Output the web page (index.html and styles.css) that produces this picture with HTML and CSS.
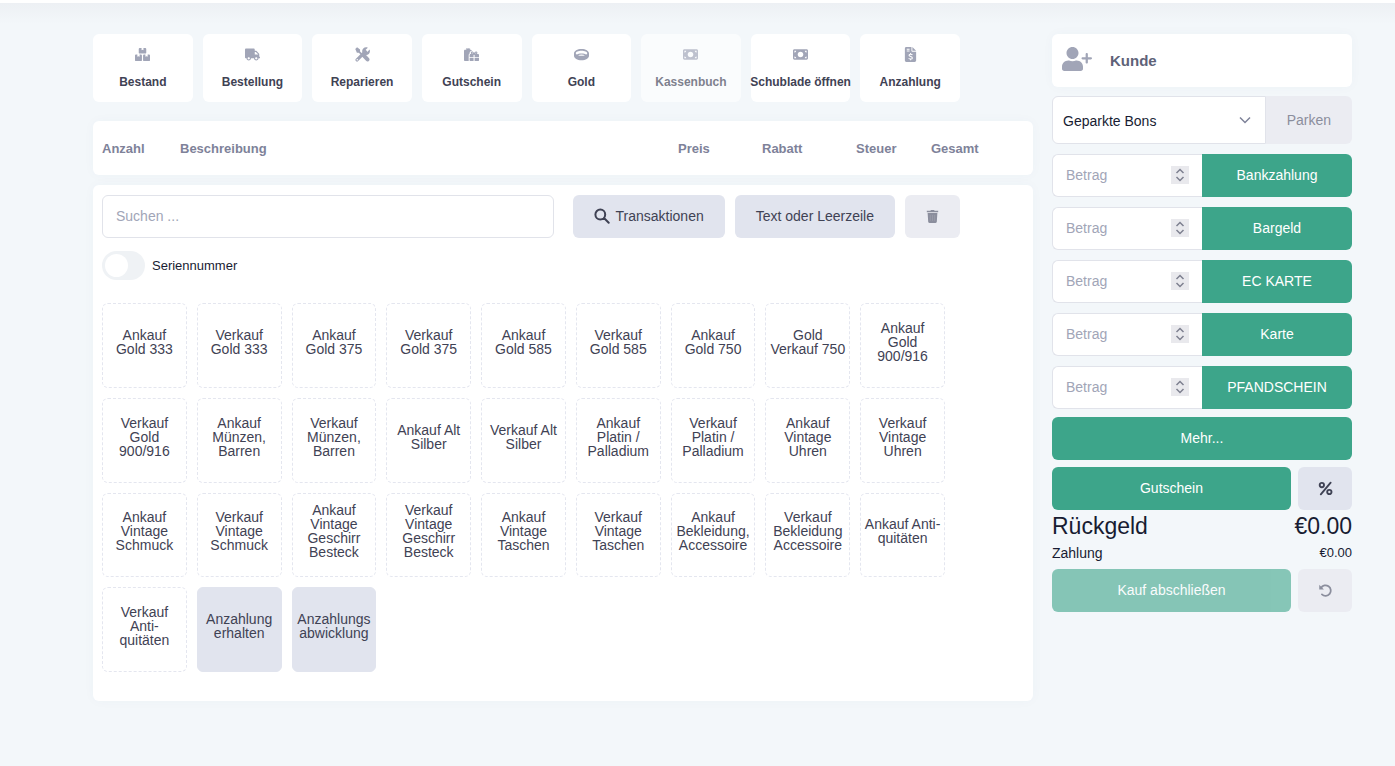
FILE: index.html
```html
<!DOCTYPE html>
<html lang="de">
<head>
<meta charset="utf-8">
<meta name="viewport" content="width=device-width, initial-scale=1">
<title>Kasse</title>
<link rel="stylesheet" href="styles.css">
</head>
<body>
<div class="page">
  <main class="main">
    <nav class="shortcuts">
      <button class="shortcut" type="button">
        <svg class="icon" viewBox="0 0 16 16"><path d="M5 1h2v2.500l1-.6 1 .6V1h2c.6 0 1 .4 1 1v4c0 .6-.4 1-1 1H5c-.6 0-1-.4-1-1V2c0-.6.400-1 1-1zM1 8h1.500v2.500l1.200-.6 1.200.6V8h1.500c.6 0 1 .4 1 1v5c0 .6-.4 1-1 1H1c-.6 0-1-.4-1-1V9c0-.6.400-1 1-1zM9.600 8h1.500v2.500l1.200-.6 1.200.6V8H15c.6 0 1 .4 1 1v5c0 .6-.4 1-1 1H9.600c-.6 0-1-.4-1-1V9c0-.6.400-1 1-1z"/></svg>
        <span>Bestand</span>
      </button>
      <button class="shortcut" type="button">
        <svg class="icon" viewBox="0 -64 640 640"><path d="M624 352h-16V243.900c0-12.700-5.100-24.900-14.100-33.900L494 110.100c-9-9-21.200-14.100-33.900-14.100H416V48c0-26.500-21.500-48-48-48H48C21.500 0 0 21.500 0 48v320c0 26.500 21.500 48 48 48h16c0 53 43 96 96 96s96-43 96-96h128c0 53 43 96 96 96s96-43 96-96h48c8.800 0 16-7.200 16-16v-32c0-8.800-7.200-16-16-16zM160 464c-26.500 0-48-21.500-48-48s21.500-48 48-48 48 21.500 48 48-21.500 48-48 48zm320 0c-26.500 0-48-21.500-48-48s21.500-48 48-48 48 21.500 48 48-21.500 48-48 48zm80-208H416V144h44.100l99.900 99.900V256z"/></svg>
        <span>Bestellung</span>
      </button>
      <button class="shortcut" type="button">
        <svg class="icon" viewBox="0 0 16 16"><path d="M.3 2.200 2.200.3l3.200 2.300v2.100l2.800 2.800-1.400 1.400L4 6.100H2z"/><path d="M9.500 9.300 13.300 13.300" fill="none" stroke="currentColor" stroke-width="4.200" stroke-linecap="round"/><path d="M2.200 13.800 11 5" fill="none" stroke="currentColor" stroke-width="3.400" stroke-linecap="round"/><path d="M13.700.7 11.400 3l.3 1.700 1.600.3 2.300-2.300c.7 1.800.3 3.500-.9 4.700-1.200 1.200-3 1.400-4.400.8L7.800 5.500c-.4-1.400-.1-2.900 1-4C10.100.2 12 0 13.700.7z"/><circle cx="2.400" cy="13.600" r=".8" fill="#fff"/></svg>
        <span>Reparieren</span>
      </button>
      <button class="shortcut" type="button">
        <svg class="icon" viewBox="0 0 16 16"><path d="M1.200 3h1.500L2 1.800l1-.5.6.9.3-1.200h.9l.3 1.200.8-.8.9.6L6 3h1.200c.6 0 1 .4 1 1v.3C6.500 4.200 5.800 5.700 6.100 7c-.7.300-1.100.8-1.100 1.600V15H1.200C.5 15 0 14.500 0 13.800V4.200C0 3.500.5 3 1.200 3z"/><path d="M6 10.800V8.600C6 8 6.400 7.500 7 7.500h3.200V10.800zM11.300 10.800V7.500H15c.6 0 1 .5 1 1.100v2.200zM6 11.800h4.200V15H7c-.6 0-1-.4-1-1zM11.300 11.800H16V14c0 .6-.4 1-1 1h-3.700z"/><path d="M10.700 7.800C8.600 7.700 7.500 7 7.900 5.800c.5-1.200 2.200-.3 2.800 2zm0 0c2.100-.1 3.400-.8 3-2-.5-1.200-2.400-.3-3 2z" fill="none" stroke="currentColor" stroke-width="1.200"/></svg>
        <span>Gutschein</span>
      </button>
      <button class="shortcut" type="button">
        <svg class="icon" viewBox="0 0 16 16"><path fill-rule="evenodd" d="M8 2c4.500 0 8 1.900 8 4.800v2.600c0 2.900-3.500 4.800-8 4.800s-8-1.900-8-4.800V6.800C0 3.900 3.500 2 8 2zm0 1.900c-3.400 0-6.100 1.200-6.100 2.700 0 .6.300 1.100 1 1.500C4 7.300 5.800 6.800 8 6.800s4 .5 5.100 1.300c.7-.4 1-.9 1-1.500 0-1.500-2.700-2.700-6.100-2.700zm0 4.200c-1.400 0-2.700.2-3.700.7 1 .4 2.300.6 3.700.6s2.700-.2 3.700-.6c-1-.5-2.300-.7-3.700-.7z"/></svg>
        <span>Gold</span>
      </button>
      <button class="shortcut" type="button" disabled>
        <svg class="icon" viewBox="0 0 16 16"><path fill-rule="evenodd" d="M1.500 2.500h13c.8 0 1.500.7 1.500 1.500v8c0 .8-.7 1.500-1.500 1.500h-13C.7 13.500 0 12.800 0 12V4c0-.8.7-1.500 1.500-1.500zM8 5C6.300 5 5 6.300 5 8s1.300 3 3 3 3-1.300 3-3-1.300-3-3-3zM1.500 4v1.900c1 0 1.900-.9 1.900-1.900zm11.100 0c0 1 .9 1.900 1.900 1.900V4zM1.500 10.100V12h1.900c0-1-.9-1.900-1.900-1.900zm13 0c-1 0-1.900.9-1.900 1.900h1.900z"/></svg>
        <span>Kassenbuch</span>
      </button>
      <button class="shortcut" type="button">
        <svg class="icon" viewBox="0 0 16 16"><path fill-rule="evenodd" d="M1.500 2.500h13c.8 0 1.500.7 1.500 1.500v8c0 .8-.7 1.500-1.500 1.500h-13C.7 13.500 0 12.800 0 12V4c0-.8.7-1.500 1.500-1.500zM8 5C6.300 5 5 6.300 5 8s1.300 3 3 3 3-1.300 3-3-1.300-3-3-3zM1.500 4v1.900c1 0 1.900-.9 1.900-1.900zm11.100 0c0 1 .9 1.900 1.900 1.900V4zM1.500 10.100V12h1.900c0-1-.9-1.900-1.900-1.900zm13 0c-1 0-1.900.9-1.900 1.900h1.900z"/></svg>
        <span>Schublade öffnen</span>
      </button>
      <button class="shortcut" type="button">
        <svg class="icon" viewBox="0 0 16 16"><path d="M3.500 0H9v4c0 .6.400 1 1 1h4v9.500c0 .8-.7 1.500-1.500 1.500h-9c-.8 0-1.500-.7-1.500-1.500v-13C2 .7 2.700 0 3.500 0zM10 0l4 4h-4z"/><path d="M4 2.300h3M4 4.300h3M10.100 8.300C9.300 7.600 6.400 7.300 6.400 8.900c0 1.700 3.600.9 3.600 2.700 0 1.600-3 1.300-4 .5M8.100 6.500v1.200M8.100 13v1.200" fill="none" stroke="#fff" stroke-width="1.100"/></svg>
        <span>Anzahlung</span>
      </button>
    </nav>

    <section class="card cart">
      <table class="cart-table">
        <thead>
          <tr>
            <th class="col-count" scope="col">Anzahl</th>
            <th scope="col">Beschreibung</th>
            <th class="col-price" scope="col">Preis</th>
            <th class="col-discount" scope="col">Rabatt</th>
            <th class="col-tax" scope="col">Steuer</th>
            <th class="col-total" scope="col">Gesamt</th>
          </tr>
        </thead>
      </table>
    </section>

    <section class="card catalog">
      <div class="toolbar">
        <input class="search" type="text" placeholder="Suchen ..." aria-label="Suchen">
        <div class="toolbar-actions">
          <button class="btn btn-light" type="button">
            <svg class="icon-search" viewBox="0 0 16 16"><path d="M11.200 6.500a4.900 4.900 0 1 1-9.800 0 4.900 4.900 0 0 1 9.800 0zM10 10l4.700 4.700" fill="none" stroke="currentColor" stroke-width="2" stroke-linecap="round"/></svg>
            Transaktionen
          </button>
          <button class="btn btn-light" type="button">Text oder Leerzeile</button>
          <button class="btn btn-light btn-trash" type="button" aria-label="Löschen" disabled>
            <svg class="icon" viewBox="0 0 16 16"><path d="M5.500.8 6 0h4l.5.800H15v2H1v-2zM2 3.800h12l-.7 10.800c0 .8-.7 1.400-1.500 1.400H4.200c-.8 0-1.500-.6-1.500-1.400z"/><path d="M5.300 6v7.500M8 6v7.500M10.700 6v7.500" stroke="#a5a8b3" stroke-width=".6"/></svg>
          </button>
        </div>
      </div>
      <label class="switch">
        <input class="switch-input" type="checkbox" role="switch">
        <span>Seriennummer</span>
      </label>
      <div class="tiles">
        <button class="tile" type="button">Ankauf<br>Gold 333</button>
        <button class="tile" type="button">Verkauf<br>Gold 333</button>
        <button class="tile" type="button">Ankauf<br>Gold 375</button>
        <button class="tile" type="button">Verkauf<br>Gold 375</button>
        <button class="tile" type="button">Ankauf<br>Gold 585</button>
        <button class="tile" type="button">Verkauf<br>Gold 585</button>
        <button class="tile" type="button">Ankauf<br>Gold 750</button>
        <button class="tile" type="button">Gold<br>Verkauf 750</button>
        <button class="tile" type="button">Ankauf<br>Gold<br>900/916</button>
        <button class="tile" type="button">Verkauf<br>Gold<br>900/916</button>
        <button class="tile" type="button">Ankauf<br>Münzen,<br>Barren</button>
        <button class="tile" type="button">Verkauf<br>Münzen,<br>Barren</button>
        <button class="tile" type="button">Ankauf Alt<br>Silber</button>
        <button class="tile" type="button">Verkauf Alt<br>Silber</button>
        <button class="tile" type="button">Ankauf<br>Platin /<br>Palladium</button>
        <button class="tile" type="button">Verkauf<br>Platin /<br>Palladium</button>
        <button class="tile" type="button">Ankauf<br>Vintage<br>Uhren</button>
        <button class="tile" type="button">Verkauf<br>Vintage<br>Uhren</button>
        <button class="tile" type="button">Ankauf<br>Vintage<br>Schmuck</button>
        <button class="tile" type="button">Verkauf<br>Vintage<br>Schmuck</button>
        <button class="tile" type="button">Ankauf<br>Vintage<br>Geschirr<br>Besteck</button>
        <button class="tile" type="button">Verkauf<br>Vintage<br>Geschirr<br>Besteck</button>
        <button class="tile" type="button">Ankauf<br>Vintage<br>Taschen</button>
        <button class="tile" type="button">Verkauf<br>Vintage<br>Taschen</button>
        <button class="tile" type="button">Ankauf<br>Bekleidung,<br>Accessoire</button>
        <button class="tile" type="button">Verkauf<br>Bekleidung<br>Accessoire</button>
        <button class="tile" type="button">Ankauf Anti-<br>quitäten</button>
        <button class="tile" type="button">Verkauf<br>Anti-<br>quitäten</button>
        <button class="tile tile-filled" type="button">Anzahlung<br>erhalten</button>
        <button class="tile tile-filled" type="button">Anzahlungs<br>abwicklung</button>
      </div>
    </section>
  </main>

  <aside class="side">
    <button class="card customer" type="button">
      <svg class="icon-customer" viewBox="0 0 640 512"><path d="M504 328V264H440c-13.300 0-24-10.700-24-24s10.700-24 24-24h64V152c0-13.300 10.700-24 24-24s24 10.700 24 24v64h64c13.300 0 24 10.700 24 24s-10.700 24-24 24H552v64c0 13.300-10.700 24-24 24s-24-10.700-24-24zM224 256c70.700 0 128-57.300 128-128S294.700 0 224 0 96 57.300 96 128s57.300 128 128 128zm89.600 32h-16.700c-22.200 10.200-46.900 16-72.900 16s-50.600-5.800-72.900-16h-16.700C60.200 288 0 348.200 0 422.400V464c0 26.500 21.500 48 48 48h352c26.500 0 48-21.500 48-48v-41.600c0-74.200-60.200-134.400-134.400-134.400z"/></svg>
      <span>Kunde</span>
    </button>

    <div class="parked">
      <div class="select-wrap">
        <select class="select" aria-label="Geparkte Bons"><option>Geparkte Bons</option></select>
        <svg class="chevron" viewBox="0 0 12 8"><path d="M1 1.500l5 5 5-5" fill="none" stroke="currentColor" stroke-width="1.500"/></svg>
      </div>
      <button class="btn btn-light btn-park" type="button" disabled>Parken</button>
    </div>

    <div class="payments">
      <div class="payment">
        <div class="amount"><input class="amount-input" type="number" placeholder="Betrag" aria-label="Betrag Bankzahlung"><svg class="spinner" viewBox="0 0 18 18"><path d="M5.500 7 9 3.500 12.500 7M5.500 11 9 14.500 12.500 11"/></svg></div>
        <button class="btn btn-green" type="button">Bankzahlung</button>
      </div>
      <div class="payment">
        <div class="amount"><input class="amount-input" type="number" placeholder="Betrag" aria-label="Betrag Bargeld"><svg class="spinner" viewBox="0 0 18 18"><path d="M5.500 7 9 3.500 12.500 7M5.500 11 9 14.500 12.500 11"/></svg></div>
        <button class="btn btn-green" type="button">Bargeld</button>
      </div>
      <div class="payment">
        <div class="amount"><input class="amount-input" type="number" placeholder="Betrag" aria-label="Betrag EC Karte"><svg class="spinner" viewBox="0 0 18 18"><path d="M5.500 7 9 3.500 12.500 7M5.500 11 9 14.500 12.500 11"/></svg></div>
        <button class="btn btn-green" type="button">EC KARTE</button>
      </div>
      <div class="payment">
        <div class="amount"><input class="amount-input" type="number" placeholder="Betrag" aria-label="Betrag Karte"><svg class="spinner" viewBox="0 0 18 18"><path d="M5.500 7 9 3.500 12.500 7M5.500 11 9 14.500 12.500 11"/></svg></div>
        <button class="btn btn-green" type="button">Karte</button>
      </div>
      <div class="payment">
        <div class="amount"><input class="amount-input" type="number" placeholder="Betrag" aria-label="Betrag Pfandschein"><svg class="spinner" viewBox="0 0 18 18"><path d="M5.500 7 9 3.500 12.500 7M5.500 11 9 14.500 12.500 11"/></svg></div>
        <button class="btn btn-green" type="button">PFANDSCHEIN</button>
      </div>
    </div>

    <div class="extra">
      <button class="btn btn-green" type="button">Mehr...</button>
      <div class="split">
        <button class="btn btn-green" type="button">Gutschein</button>
        <button class="btn btn-light" type="button" aria-label="Rabatt in Prozent">
          <svg class="icon" viewBox="0 0 16 16"><path d="M13.500 1.800 3 14.200M6.400 4.300a2.300 2.300 0 1 1-4.600 0 2.300 2.300 0 0 1 4.600 0zM14.400 11.700a2.300 2.300 0 1 1-4.600 0 2.300 2.300 0 0 1 4.600 0z" fill="none" stroke="currentColor" stroke-width="2" stroke-linecap="round"/></svg>
        </button>
      </div>
    </div>

    <div class="sum sum-change"><span>Rückgeld</span><span>€0.00</span></div>
    <div class="sum"><span>Zahlung</span><span class="sum-value">€0.00</span></div>

    <div class="split">
      <button class="btn btn-green" type="button" disabled>Kauf abschließen</button>
      <button class="btn btn-light btn-undo" type="button" aria-label="Zurücksetzen" disabled>
        <svg class="icon" viewBox="0 0 16 16"><path d="M3.200 5.300A5.600 5.600 0 1 1 4.200 12.200" fill="none" stroke="currentColor" stroke-width="1.900" stroke-linecap="round"/><path d="M1.300 1.800v5h5z"/></svg>
      </button>
    </div>
  </aside>
</div>
</body>
</html>
```
FILE: styles.css
```css
* {
  box-sizing: border-box;
}

body {
  margin: 0;
  min-height: 100vh;
  border-top: 3px solid #fff;
  background: linear-gradient(#eceff3, #f3f7fa 24px) #f3f7fa;
  color: #181c32;
  font: 14px/20px "Liberation Sans", Arial, sans-serif;
}

button,
input,
select {
  margin: 0;
  font: inherit;
  color: inherit;
}

button {
  padding: 0;
  border: 0;
  cursor: pointer;
}

svg {
  display: block;
  flex: none;
  fill: currentColor;
}

.icon {
  width: 15px;
  height: 15px;
}

.page {
  display: grid;
  grid-template-columns: minmax(0, 1fr) 300px;
  gap: 19px;
  align-items: start;
  padding: 31px 43px 31px 93px;
}

.card {
  border-radius: 6px;
  background: #fff;
  box-shadow: 0 0 12px rgba(76, 87, 125, 0.03);
}

/* Shortcut bar */
.shortcuts {
  display: grid;
  grid-template-columns: repeat(8, minmax(0, 1fr));
  gap: 10px;
  padding-right: 73px;
  margin-bottom: 19px;
}

.shortcut {
  display: flex;
  flex-direction: column;
  align-items: center;
  gap: 10px;
  padding: 13px 0 10px;
  border-radius: 6px;
  background: #fff;
  color: #3f4254;
  font-size: 12px;
  font-weight: bold;
  white-space: nowrap;
}

.shortcut .icon {
  color: #a1a5b7;
}

.shortcut:disabled {
  opacity: 0.65;
}

/* Cart */
.cart {
  margin-bottom: 10px;
  padding: 18px 9px 16px;
}

.cart-table {
  width: 100%;
  table-layout: fixed;
  border-collapse: collapse;
  color: #7e8299;
  font-size: 13px;
  text-align: left;
}

.cart-table th {
  padding: 0;
}

.col-count {
  width: 78px;
}

.col-price {
  width: 84px;
}

.col-discount {
  width: 94px;
}

.col-tax {
  width: 75px;
}

.col-total {
  width: 93px;
}

/* Catalog */
.catalog {
  padding: 10px 9px 29px;
}

.toolbar {
  display: flex;
  gap: 19px;
  padding-right: 64px;
  margin-bottom: 13px;
}

.search {
  flex: 1;
  min-width: 0;
  height: 43px;
  padding: 0 13px 2px;
  border: 1px solid #e1e3ea;
  border-radius: 6px;
  background: #fff;
}

::placeholder {
  color: #a1a5b7;
  opacity: 1;
}

.toolbar-actions {
  display: flex;
  gap: 10px;
}

.btn {
  display: flex;
  align-items: center;
  justify-content: center;
  gap: 6px;
  height: 43px;
  padding: 0 21px 1px;
  border-radius: 6px;
  white-space: nowrap;
}

.btn-light {
  background: #e1e4ee;
  color: #3f4254;
}

.btn-green {
  background: #3da58a;
  color: #fff;
}

.btn:disabled {
  opacity: 0.6;
}

.btn-light:disabled {
  background: #ebecf2;
  color: #8b8e9d;
  opacity: 1;
}

.icon-search {
  width: 16px;
  height: 16px;
}

.btn-trash .icon {
  width: 13px;
  height: 15px;
}

.switch {
  display: flex;
  align-items: center;
  gap: 7px;
  margin-bottom: 23px;
  font-size: 13px;
}

.switch-input {
  appearance: none;
  display: flex;
  align-items: center;
  width: 43px;
  height: 29px;
  padding: 0 3px;
  border-radius: 15px;
  background: #eff2f5;
}

.switch-input::before {
  content: "";
  width: 23px;
  height: 23px;
  border-radius: 50%;
  background: #fff;
}

.switch-input:checked {
  justify-content: flex-end;
  background: #3da58a;
}

.tiles {
  display: grid;
  grid-template-columns: repeat(9, minmax(0, 1fr));
  gap: 10px;
  padding-right: 79px;
}

.tile {
  aspect-ratio: 1;
  padding-bottom: 7px;
  border: 1px dashed #e4e6ef;
  border-radius: 6px;
  background: #fff;
  color: #3f4254;
  line-height: 14px;
}

.tile-filled {
  border-color: #e1e4ee;
  border-style: solid;
  background: #e1e4ee;
}

/* Checkout column */
.side {
  min-width: 0;
}

.customer {
  display: flex;
  align-items: center;
  gap: 18px;
  width: 100%;
  height: 53px;
  padding: 0 10px;
  margin-bottom: 9px;
  color: #5e6278;
  font-size: 15px;
  font-weight: bold;
}

.icon-customer {
  width: 30px;
  height: 24px;
  margin-bottom: 4px;
  color: #a1a5b7;
}

.parked {
  display: flex;
  margin-bottom: 10px;
}

.select-wrap {
  display: grid;
  flex: 1;
  align-items: center;
}

.select,
.chevron {
  grid-area: 1 / 1;
}

.select {
  appearance: none;
  width: 100%;
  height: 48px;
  padding: 2px 32px 0 10px;
  border: 1px solid #e1e3ea;
  border-radius: 6px 0 0 6px;
  background: #fff;
}

.chevron {
  justify-self: end;
  width: 12px;
  height: 8px;
  margin-right: 15px;
  color: #7e8299;
  pointer-events: none;
}

.btn-park {
  height: 48px;
  border-radius: 0 6px 6px 0;
}

.payments {
  display: grid;
  gap: 10px;
  margin-bottom: 8px;
}

.payment {
  display: grid;
  grid-template-columns: repeat(2, minmax(0, 1fr));
}

.payment .btn {
  border-radius: 0 6px 6px 0;
}

.amount {
  display: flex;
  align-items: center;
  gap: 6px;
  padding: 0 13px 1px;
  border: 1px solid #e1e3ea;
  border-right: 0;
  border-radius: 6px 0 0 6px;
  background: #fff;
}

.amount-input {
  appearance: textfield;
  flex: 1;
  min-width: 0;
  padding: 0;
  border: 0;
  background: none;
}

.amount-input::-webkit-inner-spin-button {
  display: none;
}

.spinner {
  width: 18px;
  height: 18px;
  background: #e9e9ed;
  color: #7e8090;
  fill: none;
  stroke: currentColor;
  stroke-width: 1.5;
}

.extra {
  display: grid;
  gap: 7px;
}

.split {
  display: grid;
  grid-template-columns: 1fr 54px;
  gap: 7px;
}

.sum {
  display: flex;
  justify-content: space-between;
  margin-bottom: 6px;
}

.sum-change {
  margin-bottom: 1px;
  font-size: 23px;
  line-height: 32px;
}

.sum-value {
  font-size: 13px;
}
```
